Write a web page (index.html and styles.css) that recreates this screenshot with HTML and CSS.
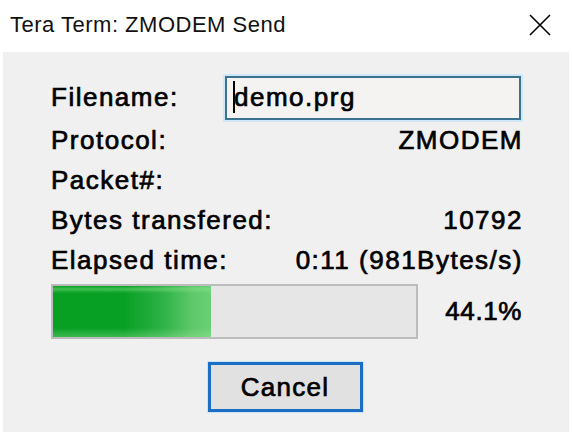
FILE: index.html
```html
<!DOCTYPE html>
<html>
<head>
<meta charset="utf-8">
<link rel="stylesheet" href="styles.css">
</head>
<body>
<div class="window">
  <div class="titlebar">
    <span class="title">Tera Term: ZMODEM Send</span>
    <svg class="close" width="22" height="22" viewBox="0 0 22 22"><path d="M1 1 L21 21 M21 1 L1 21" stroke="#000" stroke-width="1.6" fill="none"/></svg>
  </div>
  <div class="content">
    <div class="row row-first">
      <span class="label">Filename:</span>
      <div class="input"><span class="caret"></span>demo.prg</div>
    </div>
    <div class="row">
      <span class="label">Protocol:</span>
      <span class="value">ZMODEM</span>
    </div>
    <div class="row">
      <span class="label">Packet#:</span>
      <span class="value"></span>
    </div>
    <div class="row">
      <span class="label">Bytes transfered:</span>
      <span class="value">10792</span>
    </div>
    <div class="row">
      <span class="label">Elapsed time:</span>
      <span class="value">0:11 (981Bytes/s)</span>
    </div>
    <div class="progress-row">
      <div class="bar"><div class="fill" style="width: 43.5%"></div></div>
      <span class="percent">44.1%</span>
    </div>
    <div class="buttons">
      <button class="btn">Cancel</button>
    </div>
  </div>
</div>
</body>
</html>
```
FILE: styles.css
```css
html, body {
  margin: 0;
  padding: 0;
  background: #ffffff;
}
.window {
  width: 572px;
  height: 434px;
  display: flex;
  flex-direction: column;
  box-sizing: border-box;
  padding: 0 3px 2px 3px;
}
.titlebar {
  height: 52px;
  display: flex;
  align-items: center;
  justify-content: space-between;
  padding: 0 18px 0 7px;
  box-sizing: border-box;
}
.title {
  font-family: "Liberation Sans", Arial, sans-serif;
  font-size: 22px;
  letter-spacing: 0.5px;
  color: #111;
  margin-top: -3px;
}
.close {
  margin-top: -3px;
}
.content {
  flex: 1;
  background: #f0f0f0;
  padding: 24px 48px 0 48px;
  font-family: "Liberation Sans", Arial, sans-serif;
  font-size: 26px;
  letter-spacing: 1.5px;
  color: #000;
  -webkit-text-stroke: 0.7px #000;
  display: flex;
  flex-direction: column;
}
.row {
  display: flex;
  justify-content: space-between;
  align-items: baseline;
  height: 40px;
  line-height: 40px;
}
.row-first {
  height: 44px;
}
.label {
  white-space: nowrap;
}
.value {
  white-space: nowrap;
  margin-right: -2px;
}
.input {
  width: 296px;
  height: 44px;
  box-sizing: border-box;
  border: 2px solid #3d7190;
  box-shadow: 0 0 0 2px #cfe8f7;
  background: #f5f2f2;
  line-height: 38px;
  padding-left: 6px;
}
.caret {
  display: inline-block;
  width: 2px;
  height: 32px;
  background: #000;
  vertical-align: -7px;
  margin-right: -1px;
}
.progress-row {
  margin-top: 4px;
  display: flex;
  align-items: center;
  justify-content: space-between;
}
.bar {
  width: 367px;
  height: 55px;
  box-sizing: border-box;
  border: 2px solid #bcbcbc;
  background: #e6e6e6;
  display: flex;
}
.fill {
  height: 100%;
  background:
    linear-gradient(to bottom, rgba(255,255,255,0) 0%, rgba(255,255,255,0) 82%, rgba(160,230,160,0.35) 100%),
    linear-gradient(to bottom, rgba(120,220,120,0.0) 0%, rgba(140,230,140,0.45) 6%, rgba(120,220,120,0.0) 14%),
    linear-gradient(to right, #07a023 0%, #08a024 45%, #2fb247 70%, #5ec86a 88%, #6ad174 100%);
}
.percent {
  letter-spacing: 0.6px;
  margin-right: -1px;
}
.buttons {
  display: flex;
  justify-content: center;
  margin-top: 23px;
}
.btn {
  width: 155px;
  height: 50px;
  box-sizing: border-box;
  border: 3px solid #1c6dc4;
  box-shadow: 0 0 0 1px #cbe3f5;
  background: #e1e1e1;
  font-family: "Liberation Sans", Arial, sans-serif;
  font-size: 26px;
  letter-spacing: 1.3px;
  -webkit-text-stroke: 0.7px #000;
  color: #000;
  padding: 0;
  margin-left: -2px;
}
```
